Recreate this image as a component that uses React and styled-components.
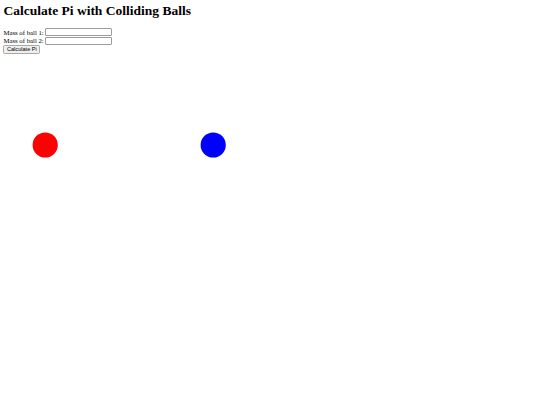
import React from "react";
import styled, { createGlobalStyle } from "styled-components";

const Global = createGlobalStyle`
  html, body { margin: 0; padding: 0; background: #fff; }
  body { padding: 3.4px; font-family: "Liberation Serif", "Times New Roman", serif; color: #000; }
`;

const Title = styled.h1`
  font-size: 13.5px;
  font-weight: bold;
  margin: 0 0 9px 0;
  line-height: 15.5px;
`;

const Row = styled.div`
  font-size: 6.75px;
  height: 8.6px;
  display: flex;
  align-items: center;
  gap: 1.6px;
`;

const Input = styled.input`
  box-sizing: border-box;
  width: 67px;
  height: 8.4px;
  padding: 0 1px;
  border: 1px solid #9c9c9c;
  border-radius: 1px;
  font-size: 5.6px;
  margin: 0;
  background: #fff;
`;

const Button = styled.button`
  display: block;
  box-sizing: border-box;
  font-family: "Liberation Sans", Arial, sans-serif;
  font-size: 5.6px;
  height: 8.6px;
  width: 37px;
  padding: 0;
  margin: 0;
  border: 1px solid #a9a9a9;
  border-radius: 1.3px;
  background: #efefef;
  color: #000;
  line-height: 6px;
`;

const Canvas = styled.svg`
  display: block;
`;

export default function App() {
  return (
    <>
      <Global />
      <Title>Calculate Pi with Colliding Balls</Title>
      <Row>
        <label>Mass of ball 1:</label>
        <Input type="text" />
      </Row>
      <Row>
        <label>Mass of ball 2:</label>
        <Input type="text" />
      </Row>
      <Button>Calculate Pi</Button>
      <Canvas width="338" height="253" viewBox="0 0 338 253">
        <circle cx="42.2" cy="91" r="12.6" fill="#ff0000" />
        <circle cx="210.2" cy="91" r="12.6" fill="#0000ff" />
      </Canvas>
    </>
  );
}
